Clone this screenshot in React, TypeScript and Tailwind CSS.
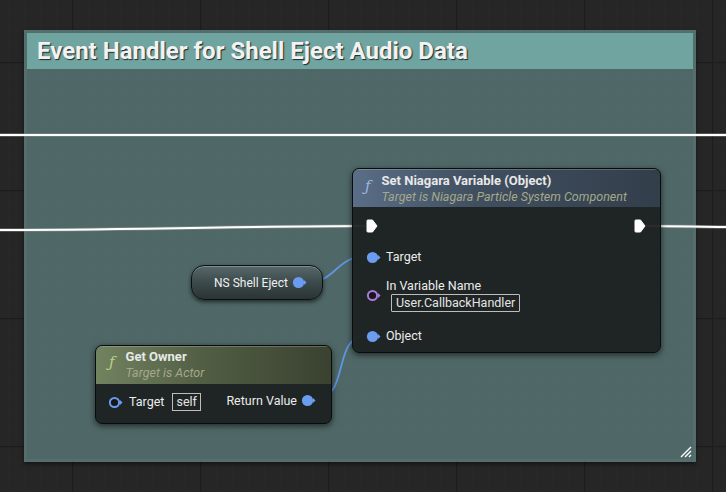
import React from "react";

const FONT = { fontFamily: "Roboto, 'Open Sans', 'Liberation Sans', sans-serif" };

function ExecPin() {
  return (
    <svg width="12" height="14" viewBox="0 0 12 14" className="shrink-0">
      <path d="M1.8 1 H6.5 L11 7 L6.5 13 H1.8 Q1 13 1 12.2 V1.8 Q1 1 1.8 1 Z" fill="#ffffff" stroke="#ffffff" strokeWidth="1" strokeLinejoin="round" />
    </svg>
  );
}

function DataPin({ color, filled }: { color: string; filled: boolean }) {
  return (
    <svg width="15" height="13" viewBox="0 0 15 13" className="shrink-0">
      {filled ? (
        <circle cx="6.5" cy="6.5" r="5.6" fill={color} />
      ) : (
        <circle cx="6.5" cy="6.5" r="4.6" fill="#141818" stroke={color} strokeWidth="2" />
      )}
      <path d="M12 4 L14.5 6.5 L12 9 Z" fill={color} />
    </svg>
  );
}

function FuncIcon({ color }: { color: string }) {
  return (
    <span className="italic text-[15px] leading-none" style={{ color, fontFamily: "'DejaVu Serif', 'Liberation Serif', serif" }}>
      ƒ
    </span>
  );
}

export default function App() {
  return (
    <div className="relative w-[726px] h-[492px] overflow-hidden bg-[#262626]" style={FONT}>
      {/* grid */}
      <svg className="absolute inset-0" width="726" height="492">
        <defs>
          <pattern id="minor" x="8" y="14" width="16" height="16" patternUnits="userSpaceOnUse">
            <path d="M0 0 V16 M0 0 H16" stroke="#2a2a2a" strokeWidth="1" />
          </pattern>
          <pattern id="major" x="72" y="62" width="128" height="128" patternUnits="userSpaceOnUse">
            <path d="M0.5 0 V128 M0 0.5 H128" stroke="#1d1d1d" strokeWidth="1.5" />
          </pattern>
        </defs>
        <rect width="726" height="492" fill="url(#minor)" />
        <rect width="726" height="492" fill="url(#major)" />
      </svg>

      {/* comment box */}
      <div className="absolute left-[24px] top-[30px] w-[672px] h-[432px] bg-[#5a7675]/90 p-[3px] flex flex-col shadow-[0_2px_4px_rgba(0,0,0,0.5)]">
        <div className="h-[36px] bg-[#70a4a0] flex items-center pl-[10px]">
          <span className="text-[24px] font-bold text-[#f2f2f2] [text-shadow:1px_1px_1px_rgba(0,0,0,0.75)] leading-none">
            Event Handler for Shell Eject Audio Data
          </span>
        </div>
        <div className="flex-1 bg-[#4d6765]/70 relative" />
        <svg className="absolute right-[4px] bottom-[4px]" width="12" height="12" viewBox="0 0 12 12">
          <path d="M11 1 L1 11 M11 5 L5 11 M11 9 L9 11" stroke="#ffffff" strokeWidth="1.4" />
        </svg>
      </div>

      {/* wires */}
      <svg className="absolute inset-0" width="726" height="492">
        <g fill="none">
          <path d="M0 135 H726" stroke="#9a9a9a" strokeWidth="3.5" opacity="0.5" />
          <path d="M0 135 H726" stroke="#ffffff" strokeWidth="2" />
          <path d="M0 230 C 150 230, 250 226, 366 226" stroke="#9a9a9a" strokeWidth="3.5" opacity="0.5" />
          <path d="M0 230 C 150 230, 250 226, 366 226" stroke="#ffffff" strokeWidth="2" />
          <path d="M646 226 C 680 226, 700 227, 726 227" stroke="#9a9a9a" strokeWidth="3.5" opacity="0.5" />
          <path d="M646 226 C 680 226, 700 227, 726 227" stroke="#ffffff" strokeWidth="2" />
          <path d="M304 283 C 338 283, 334 256, 368 256" stroke="#5f95e3" strokeWidth="1.8" />
          <path d="M313 400 C 352 400, 330 335, 368 335" stroke="#5f95e3" strokeWidth="1.8" />
        </g>
      </svg>

      {/* NS Shell Eject */}
      <div className="absolute left-[191px] top-[265px] w-[132px] h-[35px] rounded-[13px] border border-[#0d1010] bg-[linear-gradient(to_bottom,#58696b_0%,#3e4c4d_45%,#2a3434_100%)] shadow-[0_2px_4px_rgba(0,0,0,0.6),inset_0_1px_0_rgba(255,255,255,0.25)] flex items-center pl-[22px] gap-[4px]">
        <span className="text-[12px] text-[#f0f0f0] leading-none">NS Shell Eject</span>
        <DataPin color="#6a9cf0" filled />
      </div>

      {/* Set Niagara Variable */}
      <div className="absolute left-[352px] top-[168px] w-[309px] h-[185px] rounded-[7px] border border-[#0a0c0c] bg-[#1c2121]/95 shadow-[0_2px_6px_rgba(0,0,0,0.6)] flex flex-col overflow-hidden">
        <div className="h-[38px] shrink-0 bg-[linear-gradient(to_right,#5a6e87_0%,#404f60_40%,#333e4b_100%)] shadow-[inset_0_1px_0_rgba(255,255,255,0.2)] flex pl-[12px] pt-[4px] gap-[11px]">
          <div className="pt-[1px]"><FuncIcon color="#9db5e0" /></div>
          <div className="flex flex-col">
            <span className="text-[13px] font-bold text-[#e8e8e8] leading-[16px]">Set Niagara Variable (Object)</span>
            <span className="text-[12.5px] italic text-[#a4a88a] leading-[15px]">Target is Niagara Particle System Component</span>
          </div>
        </div>
        <div className="flex flex-col pl-[13px] pr-[14px]">
          <div className="h-[22px] mt-[8px] flex items-center justify-between">
            <ExecPin />
            <ExecPin />
          </div>
          <div className="h-[22px] mt-[9px] flex items-center gap-[5px]">
            <DataPin color="#6a9cf0" filled />
            <span className="text-[12.5px] text-[#ececec]">Target</span>
          </div>
          <div className="mt-[10px] flex items-center gap-[5px]">
            <DataPin color="#a97ad8" filled={false} />
            <div className="flex flex-col">
              <span className="text-[12.5px] text-[#ececec] leading-[15px]">In Variable Name</span>
              <span className="mt-[1px] ml-[5px] self-start border border-[#bdbdbd] text-[12.5px] text-[#e4e4e4] leading-[16px] px-[4px] rounded-[1px]">User.CallbackHandler</span>
            </div>
          </div>
          <div className="h-[22px] mt-[13px] flex items-center gap-[5px]">
            <DataPin color="#6a9cf0" filled />
            <span className="text-[12.5px] text-[#ececec]">Object</span>
          </div>
        </div>
      </div>

      {/* Get Owner */}
      <div className="absolute left-[95px] top-[345px] w-[237px] h-[79px] rounded-[7px] border border-[#0a0c0c] bg-[#1c2121]/95 shadow-[0_2px_6px_rgba(0,0,0,0.6)] flex flex-col overflow-hidden">
        <div className="h-[38px] shrink-0 bg-[linear-gradient(to_right,#728360_0%,#525e44_45%,#3a4230_100%)] shadow-[inset_0_1px_0_rgba(255,255,255,0.2)] flex pl-[13px] pt-[3px] gap-[11px]">
          <div className="pt-[1px]"><FuncIcon color="#b8d08a" /></div>
          <div className="flex flex-col">
            <span className="text-[13px] font-bold text-[#e8e8e8] leading-[16px]">Get Owner</span>
            <span className="text-[12.5px] italic text-[#a4a88a] leading-[15px]">Target is Actor</span>
          </div>
        </div>
        <div className="flex items-center justify-between pl-[12px] pr-[15px] mt-[9px]">
          <div className="flex items-center gap-[6px]">
            <DataPin color="#6a9cf0" filled={false} />
            <span className="text-[12.5px] text-[#ececec]">Target</span>
            <span className="ml-[2px] border border-[#bdbdbd] text-[12.5px] text-[#e4e4e4] leading-[16px] px-[3px]">self</span>
          </div>
          <div className="flex items-center gap-[4px] -mt-[3px]">
            <span className="text-[12.5px] text-[#ececec]">Return Value</span>
            <DataPin color="#6a9cf0" filled />
          </div>
        </div>
      </div>
    </div>
  );
}
